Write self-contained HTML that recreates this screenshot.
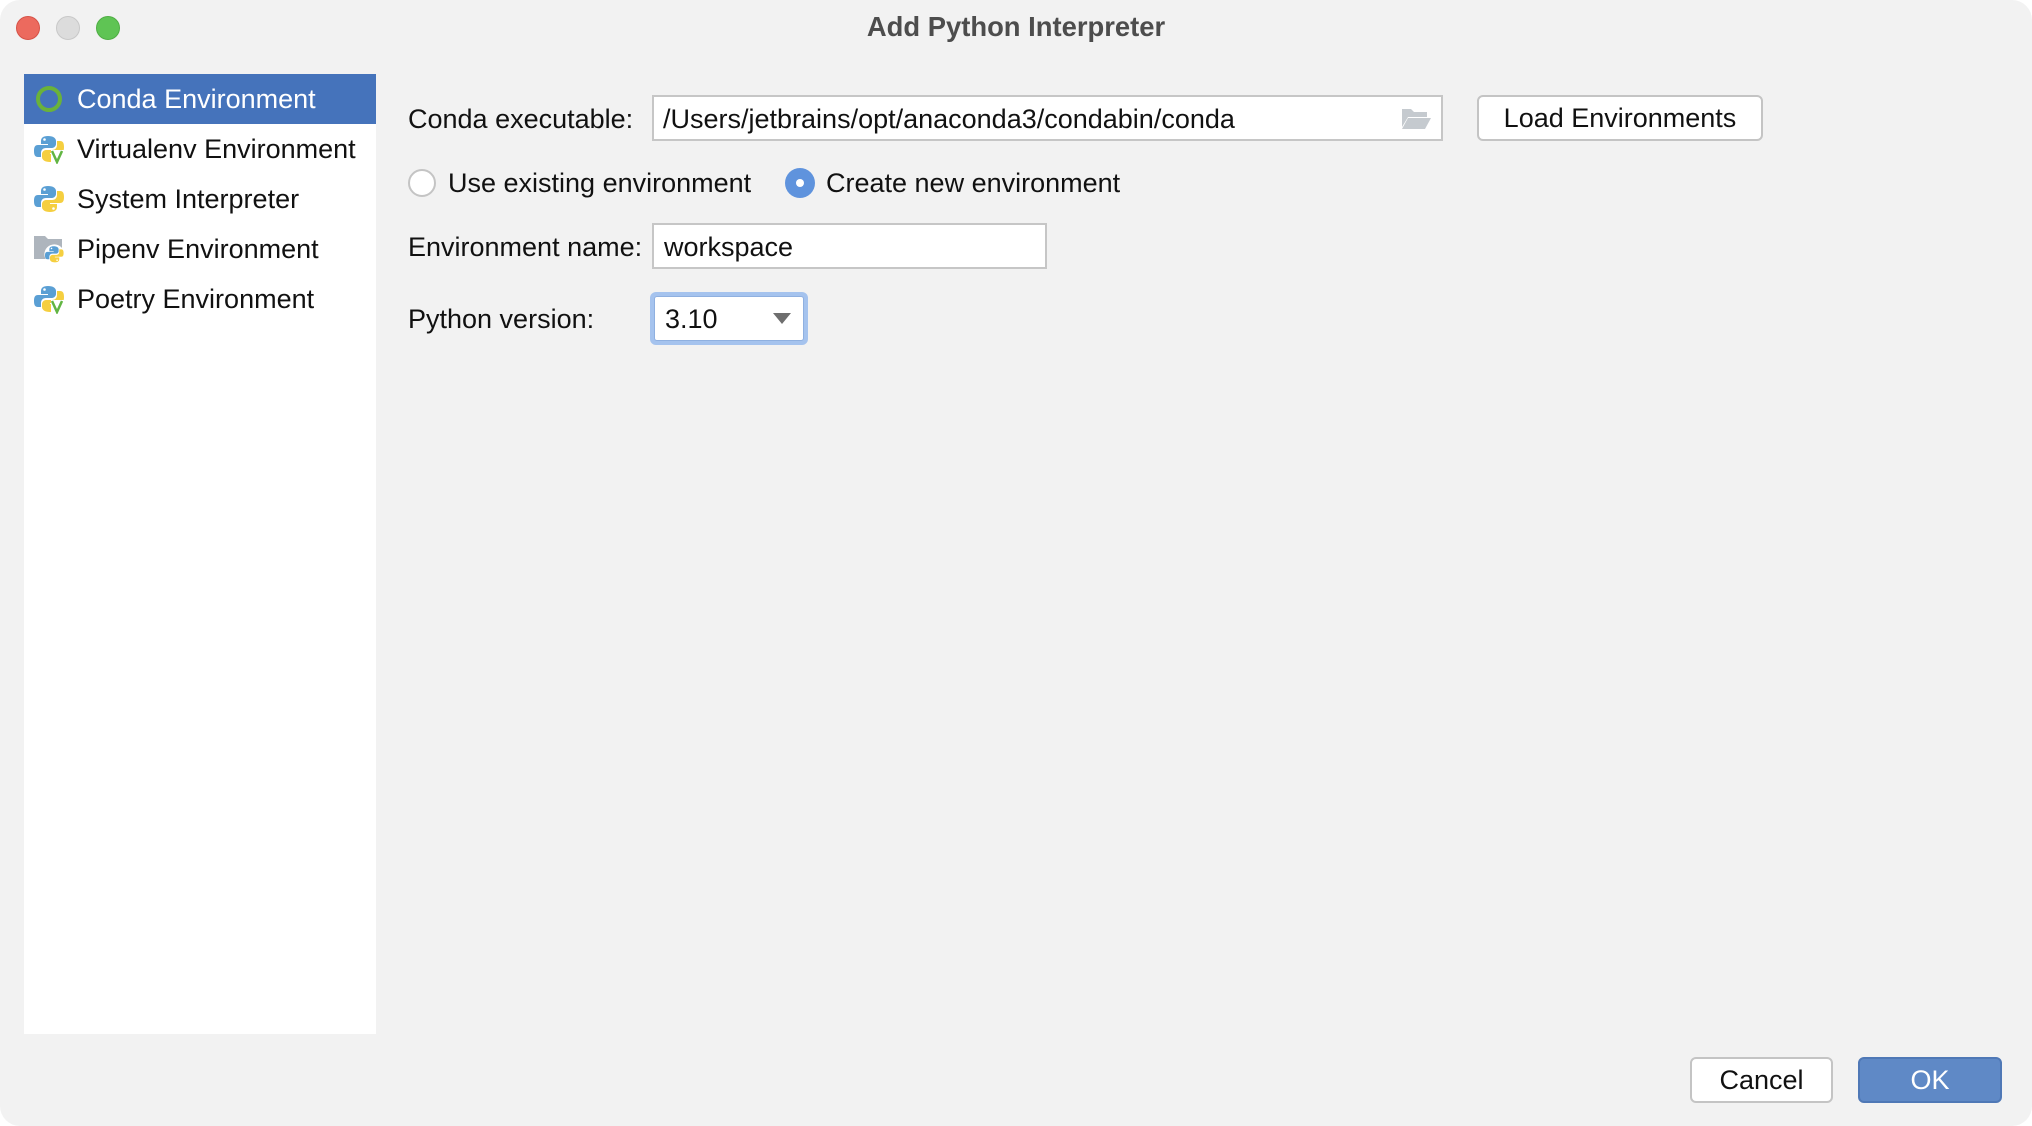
<!DOCTYPE html>
<html><head><meta charset="utf-8"><style>
*{margin:0;padding:0;box-sizing:border-box}
body{width:2032px;height:1126px;background:#fff;font-family:"Liberation Sans",sans-serif;position:relative;overflow:hidden}
.win{position:absolute;left:0;top:0;width:2032px;height:1126px;background:#f2f2f2;border-radius:20px}
.tl{position:absolute;top:16px;width:24px;height:24px;border-radius:50%}
.t{position:absolute;white-space:nowrap;color:#111;font-size:27px;line-height:30px}
.side{position:absolute;left:24px;top:74px;width:352px;height:960px;background:#fff}
.row{position:absolute;left:0;width:352px;height:50px}
.row .t{left:53px;top:10px;font-size:27px}
.ico{position:absolute;left:10px;top:10px;width:30px;height:30px}
.field{position:absolute;background:#fff;border:2px solid #c6c6c6}
.btn{position:absolute;background:#fff;border:2px solid #c4c4c4;border-radius:6px;text-align:center;font-size:27px;line-height:42px;color:#111}
</style></head><body>
<div class="win">
<div class="tl" style="left:16px;background:#ec6a5e;border:1px solid #d65247"></div>
<div class="tl" style="left:56px;background:#dcdcdc;border:1px solid #c8c8c8"></div>
<div class="tl" style="left:96px;background:#5fc454;border:1px solid #4fae44"></div>
<div class="t" style="left:0;width:2032px;text-align:center;top:12px;font-weight:bold;color:#4d4d4d;font-size:27.4px">Add Python Interpreter</div>

<div class="side">
<svg width="0" height="0" style="position:absolute"><defs>
<g id="py"><path d="M14 2c-5 0-7 2-7 5v3h7v1H4c-3 0-4 2-4 6s1 6 4 6h3v-4c0-3 2-5 5-5h6c2 0 4-2 4-4V7c0-3-3-5-8-5z" fill="#5a9fd4"/><circle cx="10.5" cy="5.5" r="1.3" fill="#fff"/><path d="M16 28c5 0 7-2 7-5v-3h-7v-1h10c3 0 4-2 4-6s-1-6-4-6h-3v4c0 3-2 5-5 5h-6c-2 0-4 2-4 4v3c0 3 3 5 8 5z" fill="#f5cf40"/><circle cx="19.5" cy="24.5" r="1.3" fill="#fff"/></g>
<g id="v"><path d="M18 17l5 11 5-11" fill="none" stroke="#62b543" stroke-width="2.5"/></g>
</defs></svg>
<div class="row" style="top:0;background:#4573bb"><svg class="ico" viewBox="0 0 30 30"><circle cx="15" cy="15" r="11" fill="none" stroke="#6ab23a" stroke-width="4"/></svg><div class="t" style="color:#fff">Conda Environment</div></div>
<div class="row" style="top:50px"><svg class="ico" viewBox="0 0 30 30"><use href="#py"/><rect x="17" y="16" width="13" height="14" fill="#fff"/><use href="#v"/></svg><div class="t">Virtualenv Environment</div></div>
<div class="row" style="top:100px"><svg class="ico" viewBox="0 0 30 30"><use href="#py"/></svg><div class="t">System Interpreter</div></div>
<div class="row" style="top:150px"><svg class="ico" viewBox="0 0 30 30"><path d="M0 2h11l3 3h14v20H0z" fill="#aeb5bd"/><g transform="translate(11 11) scale(.62)"><circle cx="15" cy="15" r="16" fill="#fff"/><use href="#py"/></g></svg><div class="t">Pipenv Environment</div></div>
<div class="row" style="top:200px"><svg class="ico" viewBox="0 0 30 30"><use href="#py"/><rect x="17" y="16" width="13" height="14" fill="#fff"/><use href="#v"/></svg><div class="t">Poetry Environment</div></div>
</div>

<div class="t" style="left:408px;top:104px">Conda executable:</div>
<div class="field" style="left:652px;top:95px;width:791px;height:46px"></div>
<div class="t" style="left:663px;top:104px">/Users/jetbrains/opt/anaconda3/condabin/conda</div>
<svg style="position:absolute;left:1400px;top:107px" width="32" height="24" viewBox="0 0 32 24"><path d="M2 2h9l3 3h13v5H8L2 20z" fill="#c5cacf"/><path d="M8 11h23l-6 11H2z" fill="#c5cacf"/></svg>
<div class="btn" style="left:1477px;top:95px;width:286px;height:46px">Load Environments</div>

<div style="position:absolute;left:408px;top:169px;width:28px;height:28px;border-radius:50%;background:#fff;border:2px solid #c4c4c4"></div>
<div class="t" style="left:448px;top:168px">Use existing environment</div>
<div style="position:absolute;left:785px;top:168px;width:30px;height:30px;border-radius:50%;background:#5f93dd"><div style="position:absolute;left:11px;top:11px;width:8px;height:8px;border-radius:50%;background:#fff"></div></div>
<div class="t" style="left:826px;top:168px">Create new environment</div>

<div class="t" style="left:408px;top:232px">Environment name:</div>
<div class="field" style="left:652px;top:223px;width:395px;height:46px"></div>
<div class="t" style="left:664px;top:232px">workspace</div>

<div class="t" style="left:408px;top:304px">Python version:</div>
<div style="position:absolute;left:650px;top:292px;width:158px;height:53px;border-radius:6px;background:#a5c3ee"></div>
<div style="position:absolute;left:654px;top:296px;width:150px;height:45px;border-radius:3px;background:#fff;border:1px solid #8fb0e0"></div>
<div class="t" style="left:665px;top:304px">3.10</div>
<div style="position:absolute;left:773px;top:313px;width:0;height:0;border-left:9px solid transparent;border-right:9px solid transparent;border-top:11px solid #6e6e6e"></div>

<div class="btn" style="left:1690px;top:1057px;width:143px;height:46px">Cancel</div>
<div class="btn" style="left:1858px;top:1057px;width:144px;height:46px;background:#5f89c6;border-color:#4f78b6;color:#fff">OK</div>
</div>
</body></html>
